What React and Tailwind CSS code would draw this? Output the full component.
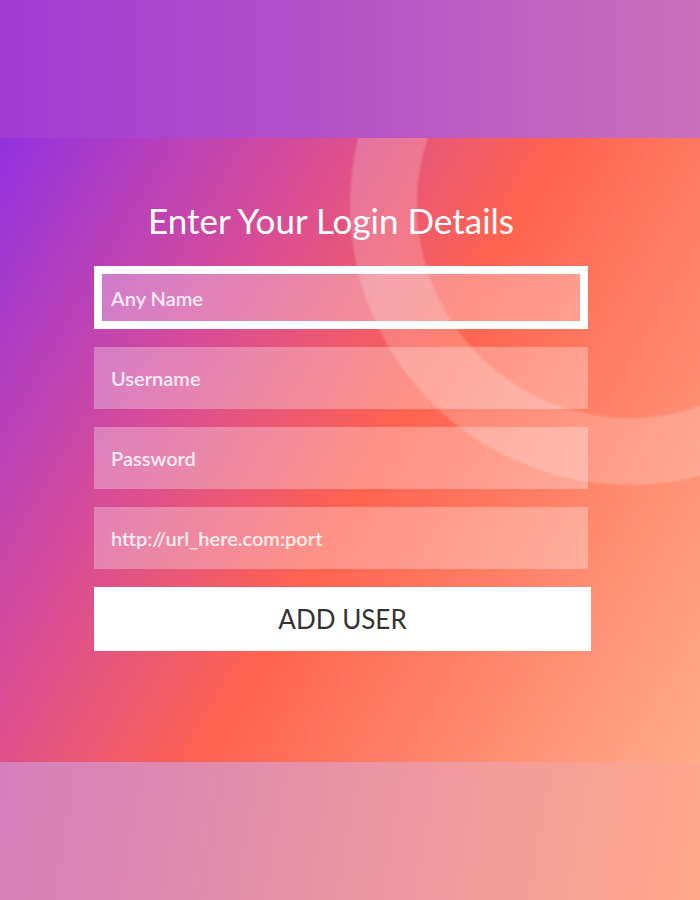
import React from "react";

const fields = ["Username", "Password", "http://url_here.com:port"];

const App = () => {
  return (
    <div className="w-[700px] h-[900px] flex flex-col font-['Lato','Noto_Sans',sans-serif]">
      {/* faded top strip */}
      <div className="h-[138px] bg-[linear-gradient(90deg,#a03bd3_0%,#b653c7_50%,#c870bb_100%)]" />

      {/* main panel */}
      <div className="relative h-[624px] overflow-hidden bg-[linear-gradient(120deg,#9232e0_0%,#d44b9c_28%,#ff6350_53%,#ffac8b_100%)]">
        {/* decorative ring */}
        <div className="absolute left-[350px] top-[-213px] w-[560px] h-[560px] rounded-full border-[67px] border-white/20 blur-[1px]" />

        <div className="relative flex flex-col pt-[62px] pl-[94px]">
          <h1 className="w-[494px] pr-[20px] text-center text-[35px] leading-[40px] text-white">
            Enter Your Login Details
          </h1>

          <div className="mt-[26px] flex flex-col gap-[18px]">
            <div className="w-[494px] h-[63px] border-[8px] border-white bg-white/30 flex items-center pl-[9px]">
              <input
                type="text"
                placeholder="Any Name"
                className="w-full bg-transparent outline-none text-[20px] font-semibold text-white placeholder:text-white/85"
              />
            </div>

            {fields.map((f) => (
              <div key={f} className="w-[494px] h-[62px] bg-white/30 flex items-center pl-[17px]">
                <input
                  type="text"
                  placeholder={f}
                  className="w-full bg-transparent outline-none text-[20px] font-semibold text-white placeholder:text-white/85"
                />
              </div>
            ))}

            <button className="w-[497px] h-[64px] bg-white text-[26px] text-[#333333] flex items-center justify-center">
              ADD USER
            </button>
          </div>
        </div>
      </div>

      {/* faded bottom strip */}
      <div className="h-[138px] bg-[linear-gradient(100deg,#d47fbc_0%,#eb94a4_50%,#ffa98b_100%)]" />
    </div>
  );
};

export default App;
